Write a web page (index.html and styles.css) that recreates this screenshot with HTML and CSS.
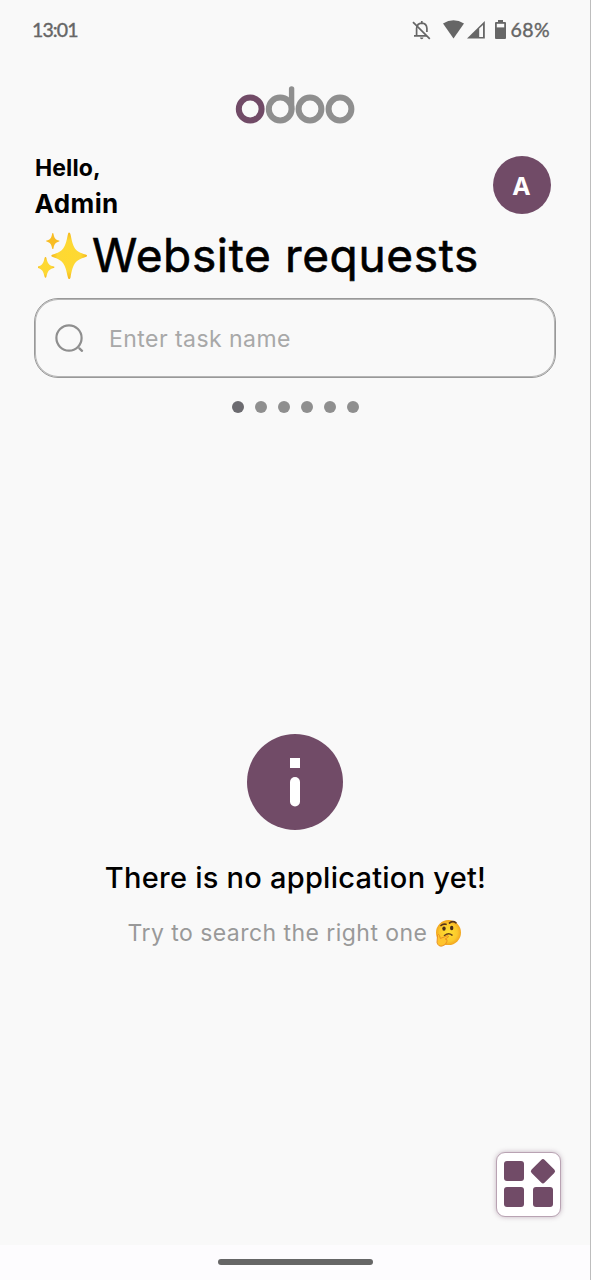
FILE: index.html
```html
<!DOCTYPE html>
<html lang="en">
<head>
<meta charset="utf-8">
<title>Website requests</title>
<link rel="stylesheet" href="styles.css">
</head>
<body>
<div class="screen">
  <header class="status-bar">
    <span class="clock">13:01</span>
    <div class="status-icons">
      <svg class="bell" width="20" height="20" viewBox="0 0 20 20" fill="none" stroke="#666" stroke-width="1.700"><path d="M4.600 15.800V8.200Q5 3.500 9.800 3.200Q14.600 3.500 14.900 8.200V12M2 15.900H15M9.800 1v2.500"/><path d="M7.900 17.500h3.600q-.3 1.800-1.800 1.800t-1.800-1.800z" fill="#666" stroke="none"/><path d="M1 2.200L17.800 18.800"/></svg>
      <svg class="wifi" width="21" height="19" viewBox="0 0 21 19" fill="#666"><path d="M0 3.600Q10.500-3.200 21 3.600L10.500 18.500z"/></svg>
      <svg class="signal" width="18" height="18" viewBox="0 0 18 18"><path d="M0 17.500L17.800 0V17.500z" fill="#666"/><path d="M12.200 7.600L16 3.900V16H12.200z" fill="#f9f9f9"/></svg>
      <svg class="battery" width="11" height="19" viewBox="0 0 11 19" fill="#666"><path d="M3 0h5v2h2q1 0 1 1v15q0 1-1 1H1q-1 0-1-1V3q0-1 1-1h2z"/><path d="M1.800 3.800h7.400v3.600H1.800z" fill="#f9f9f9"/></svg>
      <span class="percent">68%</span>
    </div>
  </header>

  <div class="logo-row">
    <svg width="120" height="40" viewBox="0 0 120 40" fill="none" stroke="#8f8f8f" stroke-width="6">
      <circle cx="105" cy="24" r="11.400"/>
      <circle cx="75" cy="24" r="11.400"/>
      <circle cx="45.200" cy="24" r="11.400"/>
      <path d="M56.600 24V4" stroke-width="5.400" stroke-linecap="round"/>
      <circle cx="15.200" cy="24" r="11.400" stroke="#714b67"/>
    </svg>
  </div>

  <section class="greeting">
    <div class="greeting-text">
      <span class="hello">Hello,</span>
      <span class="user">Admin</span>
    </div>
    <div class="avatar">A</div>
  </section>

  <h1 class="title">
    <svg width="53" height="50" viewBox="0 0 53 50">
      <defs><radialGradient id="gold"><stop offset="0" stop-color="#ffd92f"/><stop offset=".65" stop-color="#fdd835"/><stop offset="1" stop-color="#f4b61b"/></radialGradient></defs>
      <g fill="url(#gold)">
        <path d="M31 1.500q1.200 0 1.600 2.200c2.600 13 4.200 16.800 15 19.800q1.500.5 1.500 1.200t-1.500 1.200c-10.800 3.300-12.400 7-15 20-.4 2.800-2.400 2.800-2.800 0-2.600-13-4.600-16.700-15-20q-1.500-.5-1.500-1.200t1.500-1.200c10.400-3 12.400-6.800 15-19.800q.4-2.200 1.200-2.200z"/>
        <path d="M7.500 26q.7 0 .9 1c1.300 5.500 2.300 7.200 7.300 8.600q1.600.7 0 1.300c-5 1.400-6 3.300-7.300 8.900-.3 1.300-1.500 1.300-1.800 0C5.300 40.200 4.300 38.300-.2 36.900q-1.600-.6 0-1.300C4.300 34.200 5.300 32.500 6.600 27q.2-1 .9-1z"/>
        <path fill="#f8bd24" d="M14.800 2q.6 0 .7.900c.9 4.200 1.800 5.600 5.500 6.600q1.300.5 0 1c-3.700 1.100-4.600 2.600-5.500 6.700-.2 1.200-1.200 1.200-1.400 0-.9-4.100-1.800-5.600-5.500-6.700q-1.300-.5 0-1c3.700-1 4.600-2.400 5.500-6.600q.1-.9.700-.9z"/>
      </g>
    </svg>
    <span class="title-text">Website requests</span>
  </h1>

  <div class="search">
    <svg width="30" height="30" viewBox="0 0 30 30" fill="none" stroke="#8f8f8f" stroke-width="2.200"><circle cx="14" cy="14" r="12.600"/><path d="M24.400 24.400L27 26.800" stroke-width="2.400" stroke-linecap="round"/></svg>
    <span class="placeholder">Enter task name</span>
  </div>

  <div class="dots"><i class="dot active"></i><i class="dot"></i><i class="dot"></i><i class="dot"></i><i class="dot"></i><i class="dot"></i></div>

  <main class="empty">
    <svg width="96" height="96" viewBox="0 0 96 96"><circle cx="48" cy="48" r="48" fill="#714b67"/><path d="M43 24h10v10H43z" fill="#fff"/><rect x="43" y="43" width="10" height="29.500" rx="5" fill="#fff"/></svg>
    <p class="empty-title">There is no application yet!</p>
    <p class="empty-hint"><span class="hint-text">Try to search the right one</span>
      <svg width="28" height="28" viewBox="0 0 28 28">
        <defs><radialGradient id="face"><stop offset="0" stop-color="#ffdf32"/><stop offset=".7" stop-color="#fcc92c"/><stop offset="1" stop-color="#f2a51f"/></radialGradient></defs>
        <circle cx="14.500" cy="13.600" r="12.500" fill="url(#face)"/>
        <path d="M7 6.500q2-2 5-1.200M15.500 4q3.500-2.500 6.500-.2" fill="none" stroke="#59351b" stroke-width="1.700" stroke-linecap="round"/>
        <ellipse cx="10" cy="9.600" rx="1.700" ry="2.200" fill="#482c1a"/><ellipse cx="17.700" cy="9" rx="1.700" ry="2.200" fill="#482c1a"/>
        <path d="M10.500 16.500q4-3.200 7.500-.4" fill="none" stroke="#66401c" stroke-width="1.600" stroke-linecap="round"/>
        <path d="M3.500 16q1.200-1.500 2 .5l.8 3 7-2.800q1.800 0 .9 1.500l-3 1.800q2.500.2 1.800 2.200-.8 4-5 4.900-4 .5-5-3.600z" fill="#ffc42d" stroke="#e68b21" stroke-width=".9"/>
      </svg>
    </p>
  </main>

  <div class="fab-row">
    <div class="fab"><svg width="63" height="63" viewBox="0 0 63 63" fill="#714b67"><rect x="7" y="8" width="20" height="20" rx="3"/><rect x="7" y="34" width="20" height="20" rx="3"/><rect x="36" y="34" width="20" height="20" rx="3"/><rect x="36.700" y="9" width="18.500" height="18.500" rx="2.500" transform="rotate(45 45.950 18.250)"/></svg></div>
  </div>
  <footer class="nav-bar"><div class="handle"></div></footer>
</div>
</body>
</html>
```
FILE: styles.css
```css
* { box-sizing: border-box; }
body { margin: 0; background: #f9f9f9; font-family: Inter, "Noto Sans", sans-serif; color: #000; }
.screen { width: 591px; height: 1280px; display: flex; flex-direction: column; border-right: 1px solid #bdbdbd; overflow: hidden; white-space: nowrap; }
.status-bar { height: 60px; padding: 0 40px 0 32px; display: flex; align-items: center; justify-content: space-between; color: #666; font-family: Lato, sans-serif; font-size: 19.5px; font-weight: 400; -webkit-text-stroke: 0.4px #666; }
.clock { letter-spacing: -0.9px; }
.percent { letter-spacing: 0.4px; }
.status-icons { display: flex; align-items: center; }
.wifi { margin-left: 11px; }
.signal { margin-left: 3px; }
.battery { margin: 0 5px 0 10px; }
.logo-row { height: 90px; padding-top: 25px; display: flex; justify-content: center; }
.greeting { height: 78px; padding: 1px 39.5px 0 35px; display: flex; justify-content: space-between; }
.greeting-text { display: flex; flex-direction: column; font-weight: 700; }
.hello { font-size: 23px; line-height: 35px; letter-spacing: 0.1px; }
.user { font-size: 26px; line-height: 35px; letter-spacing: 0.4px; margin-left: -0.5px; }
.avatar { width: 58px; height: 58px; margin-top: 5.5px; border-radius: 50%; background: #714b67; color: #fff; display: grid; place-items: center; font: 700 25px/58px "Noto Sans", sans-serif; }
.title { height: 70px; margin: 0; padding: 3px 0 0 38px; display: flex; font-size: 46px; line-height: 48px; font-weight: 400; -webkit-text-stroke: 0.6px #000; }
.title-text { margin-left: 1px; letter-spacing: 0.65px; }
.search { height: 80px; margin: 0 34px; padding: 2px 0 0 20px; display: flex; align-items: center; border: 1px solid #999; box-shadow: inset 0 0 0 1px #b5b5b5; border-radius: 24px; color: #a8a8a8; font-size: 23px; font-weight: 400; }
.placeholder { margin: 1px 0 0 24px; letter-spacing: 0.45px; }
.dots { padding-top: 23px; display: flex; justify-content: center; gap: 11px; }
.dot { width: 12px; height: 12px; border-radius: 50%; background: #8f8f8f; }
.active { background: #6c6b70; }
.empty { height: 739px; padding-top: 321px; display: flex; flex-direction: column; align-items: center; }
.empty-title { margin: 30px 0 0 1px; font-size: 29px; line-height: 36px; font-weight: 500; letter-spacing: 0.25px; }
.empty-hint { margin: 20px 0 0; display: flex; align-items: center; gap: 7px; color: #999; font-size: 23px; line-height: 34px; font-weight: 400; }
.hint-text { letter-spacing: 0.45px; }
.fab-row { height: 94px; display: flex; justify-content: flex-end; padding: 0.5px 29.5px 0 0; }
.fab { width: 65px; height: 65px; border: 1px solid #b9a3b3; border-radius: 9px; background: #fff; box-shadow: 0 0 5px #714b6766; }
.nav-bar { height: 35px; background: #fdfcfe; display: flex; justify-content: center; padding-top: 14px; }
.handle { width: 155px; height: 6px; border-radius: 3px; background: #666; }
```
